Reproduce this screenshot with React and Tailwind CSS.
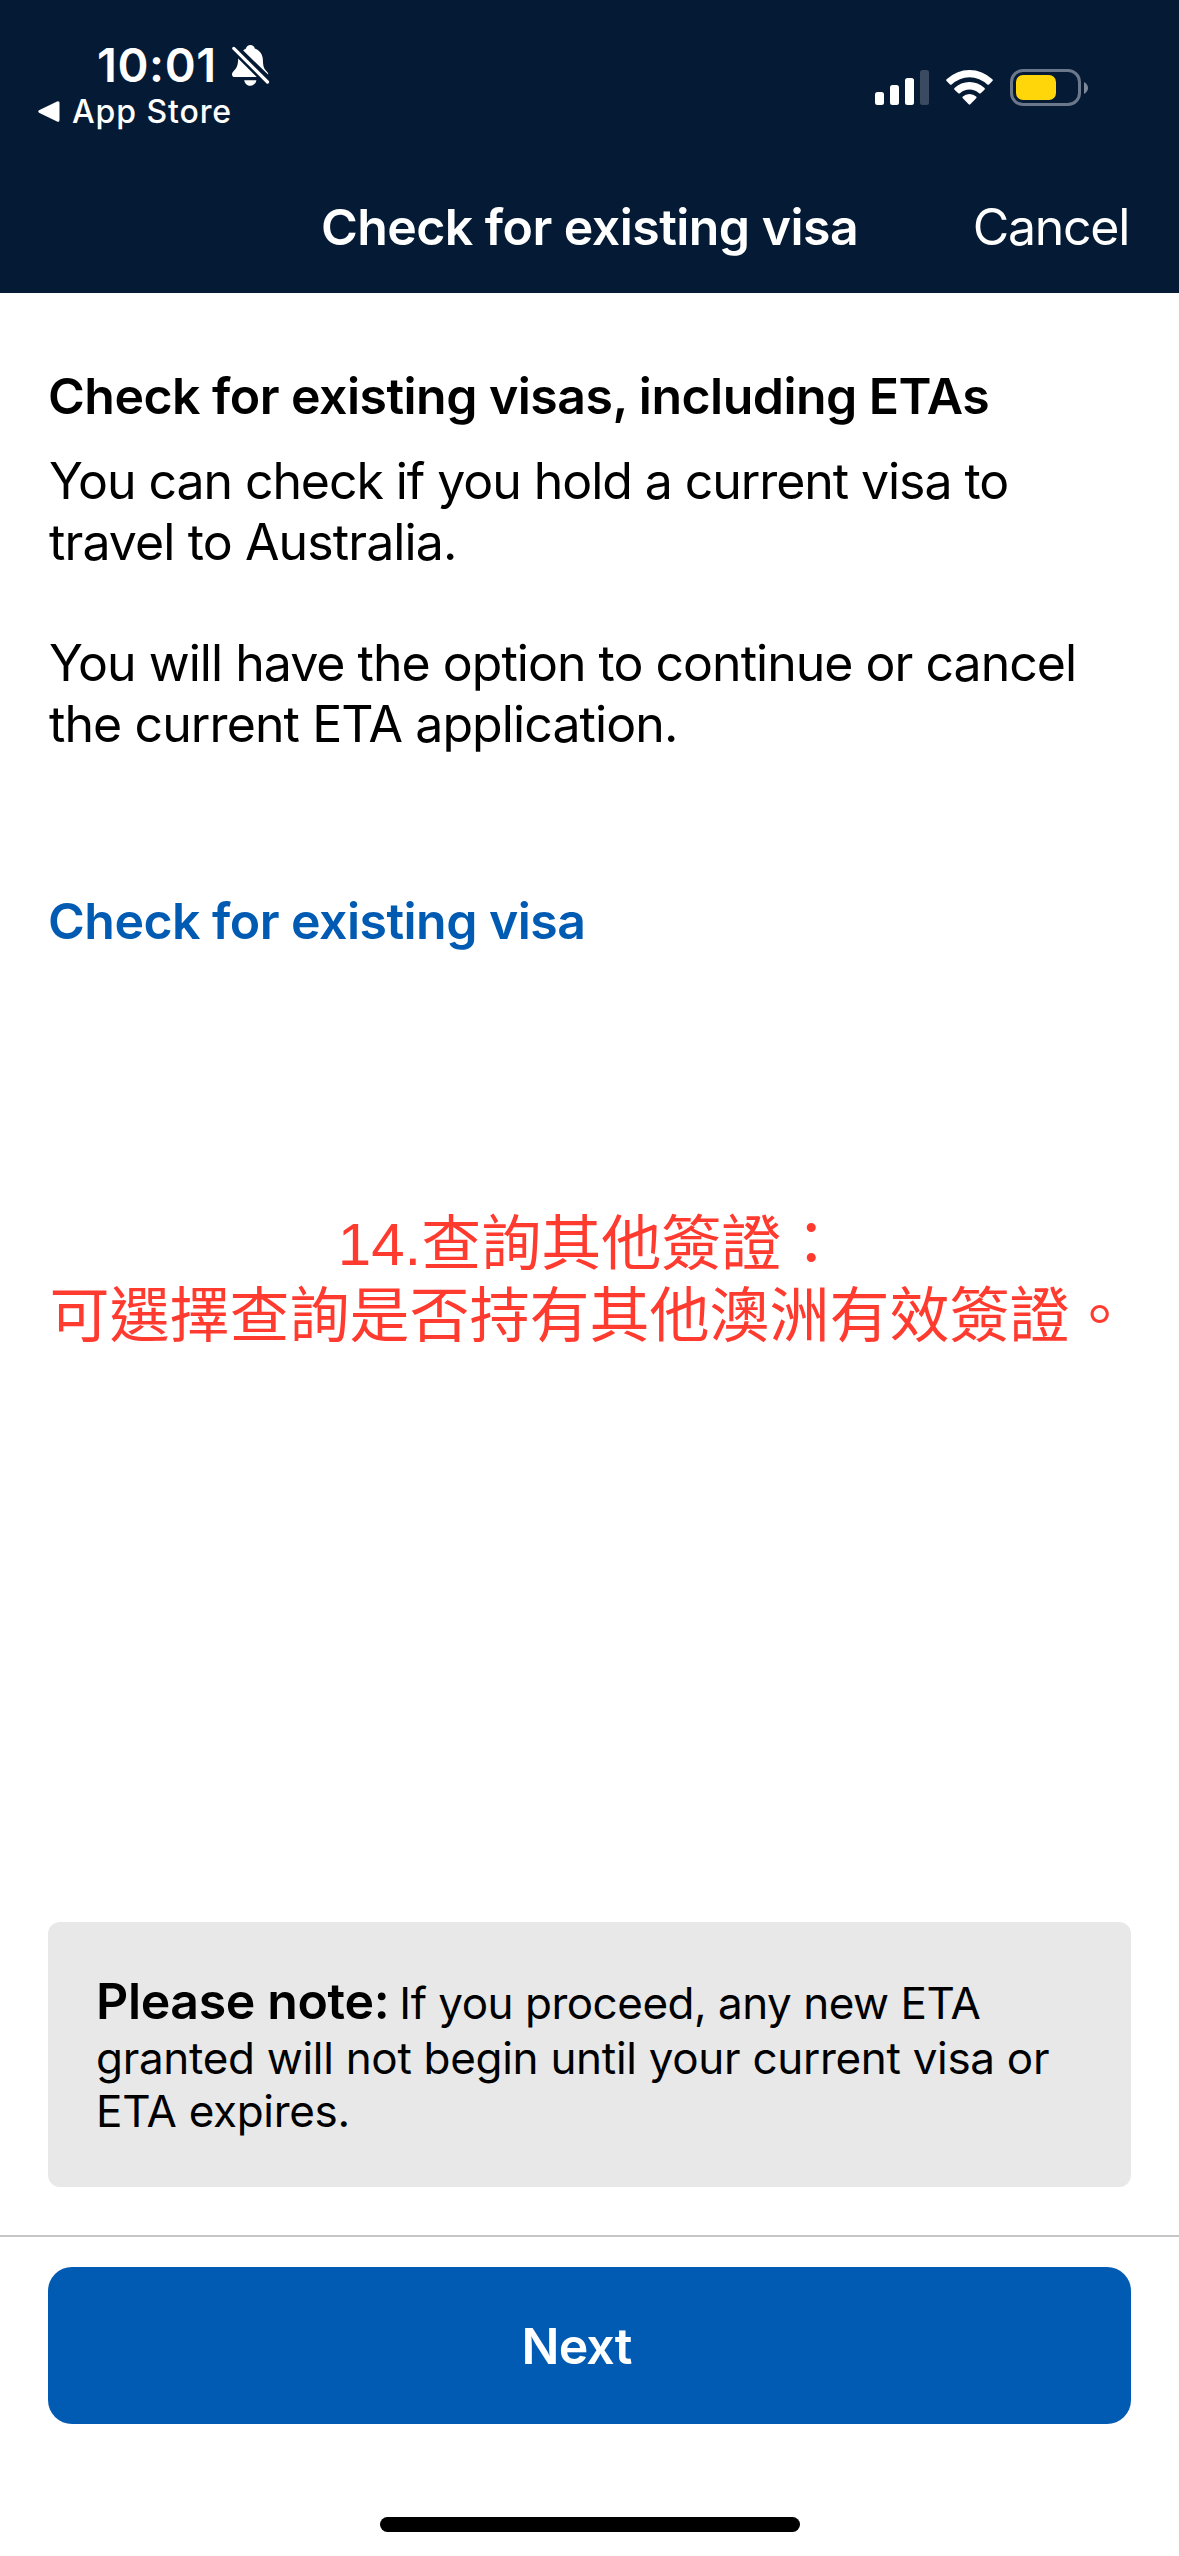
function BellOff() {
  return (
    <svg className="ml-[15px] mt-[45px] h-[42px] w-[38px]" viewBox="0 0 38 42" fill="#fff">
      <path d="M11.2 5.6C12.4 4.6 13 4.2 14 3.6C14.4 1.4 16.2 0 18.4 0S22.4 1.4 22.8 3.6C27.8 5.4 30.6 9.6 30.9 14.8C31 19.6 31.4 22.4 33 24.4L35.6 27.4C36 28 36.3 28.8 36.3 29.7Z" />
      <path d="M6.2 13.4L24.8 32.1H3C1.200 32.100 0 31 0 29.400C0 27.800 1 26.800 2.600 25C5.200 22.200 5.900 19.600 6.200 13.400Z" />
      <path d="M12.200 35.200H24.400C23.800 38.400 21.400 40.800 18.300 40.800S12.800 38.400 12.200 35.200Z" />
      <path d="M1.800 3.400L35.500 37" stroke="#051b35" strokeWidth="7" />
      <path d="M1.800 3.400L35.500 37" stroke="#fff" strokeWidth="3.200" strokeLinecap="round" />
    </svg>
  );
}

function Signal() {
  return (
    <div className="flex h-[35px] items-end gap-[6px]">
      <div className="h-[13px] w-[9px] rounded-[2.5px] bg-white" />
      <div className="h-[20px] w-[9px] rounded-[2.5px] bg-white" />
      <div className="h-[27px] w-[9px] rounded-[2.5px] bg-white" />
      <div className="h-[35px] w-[9px] rounded-[2.5px] bg-[#3a4a60]" />
    </div>
  );
}

function Wifi() {
  return (
    <svg className="ml-[17px] h-[35px] w-[47px]" viewBox="0 0 47 35" fill="#fff">
      <path d="M0.600 9.300A33 33 0 0 1 46.400 9.300Q47.200 10.200 46.400 11.100L43 14.500Q42.200 15.200 41.300 14.500A25.500 25.500 0 0 0 5.700 14.500Q4.800 15.200 4 14.500L0.600 11.100Q-0.200 10.200 0.600 9.300Z" />
      <path d="M8.500 18A21.500 21.500 0 0 1 38.500 18Q39.300 18.900 38.500 19.700L34.700 23.200Q33.900 23.800 33 23.200A14.200 14.200 0 0 0 14 23.200Q13.100 23.800 12.300 23.200L8.500 19.700Q7.700 18.900 8.500 18Z" />
      <path d="M16.800 26.600A10 10 0 0 1 30.200 26.600Q30.900 27.500 30.200 28.300L24.300 34.300Q23.500 35.100 22.700 34.300L16.800 28.300Q16.100 27.500 16.800 26.600Z" />
    </svg>
  );
}

function Battery() {
  return (
    <div className="ml-[17px] flex items-center gap-[3px]">
      <div className="h-[37px] w-[71px] rounded-[13px] border-[3px] border-[#6b778a] p-[3px]">
        <div className="h-[25px] w-[40px] rounded-[7px] bg-[#ffd60a]" />
      </div>
      <svg className="h-[12px] w-[4px]" viewBox="0 0 4 12" fill="#7d8898">
        <path d="M0 0Q4 2.500 4 6Q4 9.500 0 12Z" />
      </svg>
    </div>
  );
}

export default function App() {
  return (
    <div className="flex h-[2556px] w-[1179px] flex-col bg-white font-['Inter',sans-serif] text-black">
      <header className="h-[293px] shrink-0 bg-[#051b35] text-white">
        <div className="flex h-[197px] justify-between">
          <div>
            <div className="flex h-[92px] pl-[97px]">
              <span className="mt-[37px] text-[47px] leading-[56px] font-semibold tracking-[0.6px]">10:01</span>
              <BellOff />
            </div>
            <div className="flex items-center pl-[38px]">
              <svg className="h-[21px] w-[22px]" viewBox="0 0 22 21" fill="#fff">
                <path d="M1 9.300L19 0.400Q21.500 -0.500 21.500 2V19Q21.500 21.500 19 20.600L1 11.700Q-0.500 10.500 1 9.300Z" />
              </svg>
              <span className="ml-[12px] pt-[2px] text-[32px] leading-[36px] font-medium tracking-[0.9px]">App Store</span>
            </div>
          </div>
          <div className="mt-[69px] mr-[91px] flex h-[37px] items-center">
            <Signal />
            <Wifi />
            <Battery />
          </div>
        </div>
        <div className="grid grid-cols-[1fr_auto_1fr] px-[50px] text-[50px] leading-[60px]">
          <span />
          <h1 className="font-semibold tracking-[-0.54px]">Check for existing visa</h1>
          <span className="text-right tracking-[-1.3px]">Cancel</span>
        </div>
      </header>

      <main className="flex grow flex-col px-[48px] pt-[73px]">
        <h2 className="text-[50px] leading-[60px] font-semibold tracking-[-0.53px]">Check for existing visas, including ETAs</h2>
        <p className="mt-[25px] pl-[1px] text-[50px] leading-[61px] tracking-[-1px]">
          <span className="tracking-[-1.07px]">You can check if you hold a current visa to</span>
          <br />
          <span className="tracking-[-0.89px]">travel to Australia.</span>
        </p>
        <p className="mt-[60px] pl-[1px] text-[50px] leading-[61px] tracking-[-0.98px]">
          You will have the option to continue or cancel
          <br />
          <span className="tracking-[-0.9px]">the current ETA application.</span>
        </p>
        <a className="mt-[136px] text-[50px] leading-[60px] font-semibold tracking-[-0.53px] text-[#025bb2]">Check for existing visa</a>
        <p
          lang="zh-TW"
          className="mt-[258px] text-center font-['Liberation_Sans','Noto_Sans_CJK_TC',sans-serif] text-[60px] leading-[72px] whitespace-nowrap text-[#ff3b30]"
        >
          14.查詢其他簽證：
          <br />
          可選擇查詢是否持有其他澳洲有效簽證。
        </p>
        <div className="mt-auto mb-[48px] h-[265px] rounded-[12px] bg-[#e8e8e8] px-[48px] pt-[49px] text-[44px] leading-[53px] tracking-[-0.3px]">
          <strong className="mr-[-2px] text-[50px] leading-[61px] font-semibold tracking-[-0.35px]">Please note:</strong>{' '}
          <span className="tracking-[-0.5px]">If you proceed, any new ETA</span>
          <br />
          granted will not begin until your current visa or
          <br />
          ETA expires.
        </div>
      </main>

      <footer className="flex h-[321px] shrink-0 flex-col border-t-[2px] border-[#c6c6c8] px-[48px] pt-[30px]">
        <button className="h-[157px] rounded-[24px] bg-[#025bb2] pt-[2px] pr-[26px] text-[50px] font-semibold tracking-[-0.9px] text-white">Next</button>
        <div className="mx-auto mt-[93px] h-[15px] w-[420px] rounded-full bg-black" />
      </footer>
    </div>
  );
}
